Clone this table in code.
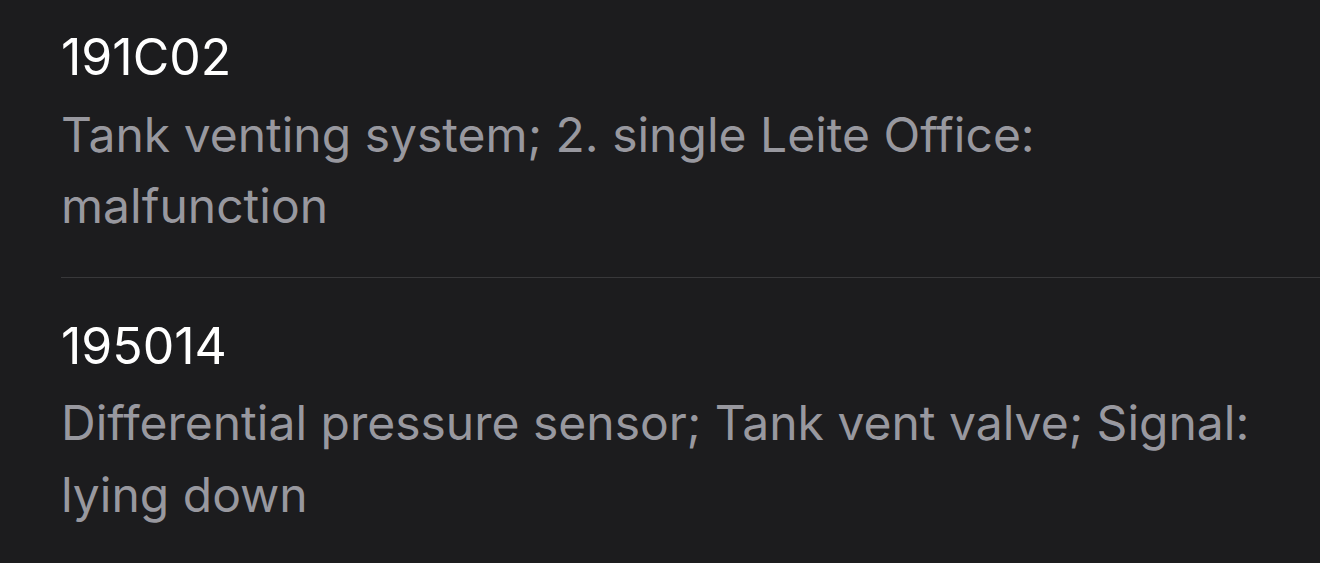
import React from "react";

const items = [
  { code: "191C02", desc: "Tank venting system; 2. single Leite Office: malfunction" },
  { code: "195014", desc: "Differential pressure sensor; Tank vent valve; Signal: lying down" },
];

export default function App() {
  return (
    <div
      className="w-[1320px] h-[563px] overflow-hidden bg-[#1c1c1e]"
      style={{ fontFamily: "Inter, 'Noto Sans', 'Liberation Sans', sans-serif" }}
    >
      <div className="-mt-[11px]">
        {items.map((it) => (
          <div key={it.code} className="pl-[61px]">
            <div className="pt-[33px] pb-[35px] pr-[40px]">
              <div className="text-[50px] leading-[71.5px] text-white">{it.code}</div>
              <div className="mt-[5px] text-[48px] leading-[71.5px] text-[#98989f]">{it.desc}</div>
            </div>
            <div className="h-px bg-[#38383a]" />
          </div>
        ))}
      </div>
    </div>
  );
}
